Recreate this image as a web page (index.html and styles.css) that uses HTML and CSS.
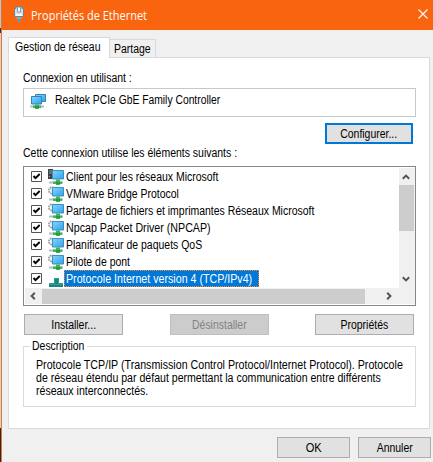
FILE: index.html
```
<!DOCTYPE html>
<html lang="fr">
<head>
<meta charset="utf-8">
<title>Propriétés de Ethernet</title>
<link rel="stylesheet" href="styles.css">
</head>
<body>
<svg class="defs" width="0" height="0" aria-hidden="true">
  <defs>
    <linearGradient id="screen" x1="0" y1="0" x2="1" y2="1"><stop offset="0" stop-color="#84d6fc"/><stop offset="1" stop-color="#2fa2ee"/></linearGradient>
    <g id="monitor">
      <path d="M1 12.500h14v2H1z" fill="#b5bcbc"/>
      <path d="M4.500 1.500h11v8.500h-11z" fill="url(#screen)" stroke="#3a8fc4"/>
      <path d="M8 10.500h4v2h2v2.500h-2v1H8v-1H5v-2.500h3z" fill="#3db65a"/>
      <path d="M8 13h4v2H8z" fill="#2a9748"/>
    </g>
    <symbol id="service" viewBox="0 0 16 16">
      <circle cx="4" cy="4.500" r="3.200" fill="#edf0f1" stroke="#8f999f" stroke-width="1.600" stroke-dasharray="1.700 .8"/>
      <use href="#monitor"/>
    </symbol>
    <symbol id="client" viewBox="0 0 16 16">
      <path d="M0 0h5v10H0z" fill="#3c4246"/><path d="M1 2h3M1 4h3" stroke="#929da4"/><path d="M1 7h1v1H1z" fill="#74d66c"/>
      <use href="#monitor"/>
    </symbol>
    <symbol id="check" viewBox="0 0 11 11"><path d="M.5.5h10v10H.5z" fill="#fff" stroke="#555"/><path d="M2.500 5l2 2.200L8.700 3" fill="none" stroke="#000" stroke-width="1.900"/></symbol>
    <symbol id="chevron" viewBox="0 0 8 8"><path d="M.8 5.800L4 2.600l3.200 3.200" fill="none" stroke="#555" stroke-width="2"/></symbol>
  </defs>
</svg>
<div class="desktop">
<div class="window">
  <header class="titlebar">
    <svg class="plug" width="10" height="17" viewBox="0 0 10 17"><path d="M2 1.500h6v2h1.500v8h-9v-8H2z" fill="#d3e0e7" stroke="#71838e"/><path d="M3.500 2v5h3V2z" fill="#fff" stroke="#8397a2"/><path d="M2 9h6v2H2z" fill="#f5fafc"/><path d="M2.500 12h5v2h-5z" fill="#8fa6b1"/><path d="M4 14h2v3H4z" fill="#3fa9dc"/></svg>
    <span class="t title">Propriétés de Ethernet</span>
    <svg class="close" width="10" height="10" viewBox="0 0 10 10"><path d="M.5.500l9 9M9.500.500l-9 9" stroke="#fff" stroke-width="1.100"/></svg>
  </header>
  <main>
    <nav class="tabs">
      <div class="tab active"><span class="t">Gestion de réseau</span></div>
      <div class="tab"><span class="t">Partage</span></div>
    </nav>
    <section class="panel">
      <p class="label"><span class="t">Connexion en utilisant :</span></p>
      <div class="adapter">
        <svg width="17" height="16" viewBox="0 0 17 16"><path d="M0 12.500h14v2H0z" fill="#b5bcbc"/><path d="M5.500 1.500h10v7h-10z" fill="url(#screen)" stroke="#3385b6"/><path d="M1.500 3.500h10v7.500h-10z" fill="url(#screen)" stroke="#3385b6"/><path d="M5 11.500h4v1h2v2.500H9v1H5v-1H3v-2.500h2z" fill="#3db65a"/><path d="M5 13h4v2H5z" fill="#2a9748"/></svg>
        <span class="t narrow">Realtek PCIe GbE Family Controller</span>
      </div>
      <div class="configure"><button class="focus"><span class="t">Configurer...</span></button></div>
      <p class="label list-label"><span class="t">Cette connexion utilise les éléments suivants :</span></p>
      <div class="list">
        <ul>
          <li><svg class="check"><use href="#check"/></svg><svg class="icon"><use href="#client"/></svg><span class="name"><span class="t">Client pour les réseaux Microsoft</span></span></li>
          <li><svg class="check"><use href="#check"/></svg><svg class="icon"><use href="#service"/></svg><span class="name"><span class="t">VMware Bridge Protocol</span></span></li>
          <li><svg class="check"><use href="#check"/></svg><svg class="icon"><use href="#service"/></svg><span class="name"><span class="t">Partage de fichiers et imprimantes Réseaux Microsoft</span></span></li>
          <li><svg class="check"><use href="#check"/></svg><svg class="icon"><use href="#service"/></svg><span class="name"><span class="t wide">Npcap Packet Driver (NPCAP)</span></span></li>
          <li><svg class="check"><use href="#check"/></svg><svg class="icon"><use href="#service"/></svg><span class="name"><span class="t">Planificateur de paquets QoS</span></span></li>
          <li><svg class="check"><use href="#check"/></svg><svg class="icon"><use href="#service"/></svg><span class="name"><span class="t">Pilote de pont</span></span></li>
          <li><svg class="check"><use href="#check"/></svg><svg class="icon" viewBox="0 0 16 16"><path d="M6 7h5v5h4v4H1v-4h5z" fill="#2b9d97"/><path d="M7 8h3v5H7zM1 14h14v2H1z" fill="#1d8580"/></svg><span class="name selected"><span class="t wide">Protocole Internet version 4 (TCP/IPv4)</span></span></li>
        </ul>
        <div class="vscroll"><svg class="arrow"><use href="#chevron"/></svg><div class="vthumb"></div><svg class="arrow down"><use href="#chevron"/></svg></div>
        <div class="hscroll"><svg class="arrow left"><use href="#chevron"/></svg><div class="hthumb"></div><svg class="arrow right"><use href="#chevron"/></svg></div>
      </div>
      <div class="actions">
        <button><span class="t">Installer...</span></button>
        <button class="disabled"><span class="t">Désinstaller</span></button>
        <button><span class="t">Propriétés</span></button>
      </div>
      <div class="group">
        <h2><span class="t">Description</span></h2>
        <p><span class="t wide">Protocole TCP/IP (Transmission Control Protocol/Internet Protocol). Protocole</span></p>
        <p><span class="t medium">de réseau étendu par défaut permettant la communication entre différents</span></p>
        <p><span class="t medium">réseaux interconnectés.</span></p>
      </div>
    </section>
    <footer>
      <button class="small"><span class="t ok">OK</span></button>
      <button class="small"><span class="t">Annuler</span></button>
    </footer>
  </main>
</div>
</div>
</body>
</html>
```
FILE: styles.css
```
* { box-sizing: border-box; }
body, p, ul, h2 { margin: 0; padding: 0; }
body { font: 12px/13px "Liberation Sans", Arial, sans-serif; color: #000; overflow: hidden; }
.defs { position: absolute; }
svg { flex: none; display: block; }
.t { display: inline-block; white-space: nowrap; transform: scaleX(.872); transform-origin: left center; }
.narrow { transform: scaleX(.86); }
.medium { transform: scaleX(.881); }
.wide { transform: scaleX(.889); }

.desktop { height: 462px; padding-left: 1px; background: linear-gradient(#b9c8d0 0 28px, #572335 28px 33px, #d3d3d3 33px 428px, #29292e 428px); }
.window { height: 462px; border-left: 1px solid #e5752d; background: #f0f0f0; }
.titlebar { height: 30px; padding: 0 5px 0 12px; display: flex; align-items: center; background: #f9640e; color: #fff; }
.plug { margin-top: -3px; }
.title { margin-left: 7px; font-family: "Open Sans", sans-serif; transform: scaleX(.915); }
.close { margin: -2px 0 0 auto; }
main { padding-left: 6px; }

.tabs { display: flex; align-items: flex-end; height: 28px; margin-bottom: -1px; }
.tab { height: 19px; width: 46px; padding: 3px 0 0 4px; border: 1px solid #d9d9d9; border-left: 0; }
.tab.active { height: 21px; width: 102px; padding-left: 6px; border-left: 1px solid #d9d9d9; border-bottom: 0; background: #fff; z-index: 1; }
.panel { width: 422px; height: 372px; padding: 14px 14px 0; border: 1px solid #d9d9d9; background: #fff; }
.label { height: 13px; }
.adapter { height: 29px; width: 393px; margin-top: 3px; padding: 0 0 4px 6px; display: flex; align-items: center; gap: 8px; border: 1px solid #c8c8c8; }
.configure { display: flex; justify-content: flex-end; width: 390px; margin-top: 6px; }
button { width: 99px; height: 21px; padding: 1px 0 0; display: flex; align-items: center; justify-content: center; border: 1px solid #adadad; background: #e1e1e1; font: inherit; color: #000; }
button .t { transform-origin: center; }
button.focus { width: 88px; border: 2px solid #0078d7; }
button.disabled { background: #ccc; border-color: #bfbfbf; color: #838383; }
.list-label { margin-top: 3px; }

.list { width: 393px; height: 140px; margin-top: 6px; padding: 1px; display: grid; grid-template: 120px 16px / 374px 15px; border: 1px solid #828790; }
ul { list-style: none; padding-left: 6px; overflow: hidden; }
li { height: 17px; display: flex; align-items: center; }
.check { width: 11px; height: 11px; }
.icon { width: 16px; height: 16px; margin-left: 6px; }
.name { height: 17px; padding: 3px 0 0 2px; white-space: nowrap; }
.selected { width: 195px; background: #0078d7; color: #fff; outline: 1px dotted #ff8728; outline-offset: -1px; }
.vscroll { width: 16px; height: 136px; grid-row: 1 / 3; grid-column: 2; background: #f0f0f0; }
.arrow { width: 8px; height: 8px; margin: 5px 0 4px 3px; }
.vthumb { width: 15px; height: 46px; background: #cdcdcd; }
.down { margin: 44px 0 0 3px; transform: rotate(180deg); }
.hscroll { display: flex; align-items: center; background: #f0f0f0; grid-row: 2; grid-column: 1; }
.left, .right { margin: 0 5px 0 4px; }
.left { transform: rotate(-90deg); }
.right { margin-left: 20px; transform: rotate(90deg); }
.hthumb { width: 323px; height: 15px; background: #cdcdcd; }

.actions { display: flex; width: 390px; margin: 8px 0 0 1px; justify-content: space-between; }
.group { width: 393px; height: 61px; margin-top: 11px; padding: 12px 0 0 12px; border: 1px solid #dcdcdc; }
h2 { width: 57px; height: 13px; margin: -19px 0 6px -6px; padding-left: 2px; background: #fff; font: inherit; }
footer { display: flex; gap: 8px; padding: 8px 0 0 269px; }
.small { width: 73px; }
.ok { transform: scaleX(.92); }
```
